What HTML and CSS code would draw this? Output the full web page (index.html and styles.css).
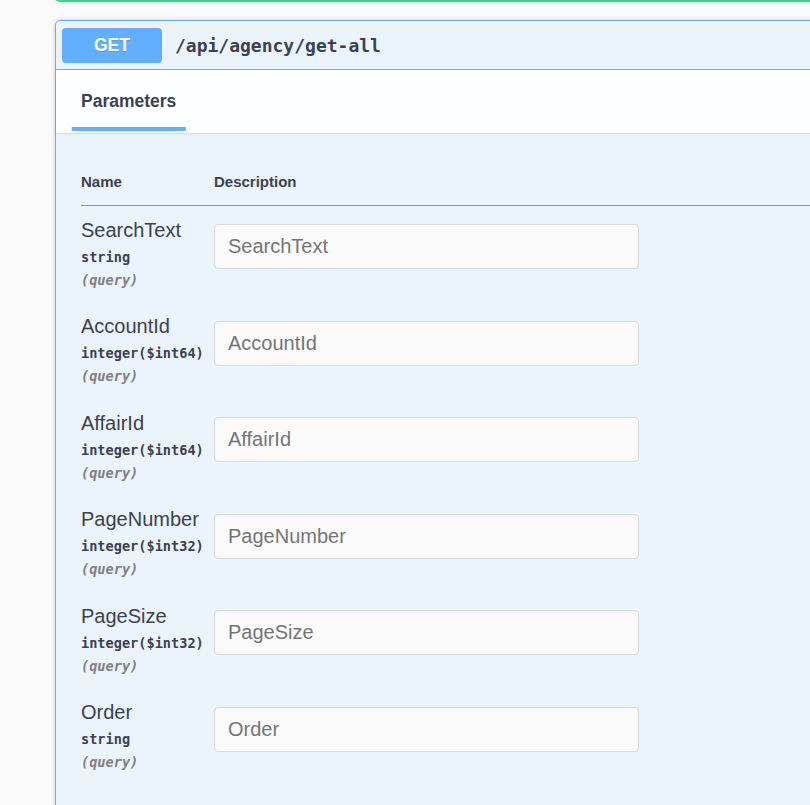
FILE: index.html
```html
<!DOCTYPE html>
<html>
<head>
<meta charset="utf-8">
<link rel="stylesheet" href="styles.css">
</head>
<body>
<div class="wrapper">
  <div class="prev-block"></div>
  <div class="opblock">
    <div class="summary">
      <span class="method">GET</span>
      <span class="path">/api/agency/get-all</span>
    </div>
    <div class="section-header">
      <div class="tab"><span class="tab-label">Parameters</span></div>
    </div>
    <div class="table-container">
      <table class="params">
        <thead>
          <tr><th class="col-name">Name</th><th class="col-desc">Description</th></tr>
        </thead>
        <tbody>
          <tr>
            <td class="col-name"><div class="pname">SearchText</div><div class="ptype">string</div><div class="pin">(query)</div></td>
            <td class="col-desc"><input class="pinput" type="text" placeholder="SearchText" disabled></td>
          </tr>
          <tr>
            <td class="col-name"><div class="pname">AccountId</div><div class="ptype">integer($int64)</div><div class="pin">(query)</div></td>
            <td class="col-desc"><input class="pinput" type="text" placeholder="AccountId" disabled></td>
          </tr>
          <tr>
            <td class="col-name"><div class="pname">AffairId</div><div class="ptype">integer($int64)</div><div class="pin">(query)</div></td>
            <td class="col-desc"><input class="pinput" type="text" placeholder="AffairId" disabled></td>
          </tr>
          <tr>
            <td class="col-name"><div class="pname">PageNumber</div><div class="ptype">integer($int32)</div><div class="pin">(query)</div></td>
            <td class="col-desc"><input class="pinput" type="text" placeholder="PageNumber" disabled></td>
          </tr>
          <tr>
            <td class="col-name"><div class="pname">PageSize</div><div class="ptype">integer($int32)</div><div class="pin">(query)</div></td>
            <td class="col-desc"><input class="pinput" type="text" placeholder="PageSize" disabled></td>
          </tr>
          <tr>
            <td class="col-name"><div class="pname">Order</div><div class="ptype">string</div><div class="pin">(query)</div></td>
            <td class="col-desc"><input class="pinput" type="text" placeholder="Order" disabled></td>
          </tr>
        </tbody>
      </table>
    </div>
  </div>
</div>
</body>
</html>
```
FILE: styles.css
```css
html, body {
  margin: 0;
  padding: 0;
  background: #fafafa;
  overflow: hidden;
  height: 805px;
  font-family: "Liberation Sans", Arial, sans-serif;
  color: #3b4151;
}
.wrapper {
  padding-left: 55px;
  width: 1100px;
}
.prev-block {
  margin-top: -38px;
  height: 40px;
  box-sizing: border-box;
  border: 1px solid #49cc90;
  border-top: none;
  border-bottom-width: 2px;
  border-radius: 0 0 5px 5px;
  background: #fafafa;
  box-shadow: 0 0 4px rgba(0,0,0,.19);
  margin-bottom: 18px;
}
.opblock {
  border: 1px solid #61affe;
  border-radius: 5px;
  background: #ebf3fb;
  box-shadow: 0 0 4px rgba(0,0,0,.19);
  height: 900px;
}
.summary {
  display: flex;
  align-items: center;
  padding: 6px 6px;
  height: 36px;
  border-bottom: 1px solid #61affe;
}
.method {
  display: inline-block;
  width: 100px;
  height: 35px;
  line-height: 35px;
  text-align: center;
  background: #61affe;
  color: #fff;
  border-radius: 4px;
  font-weight: 700;
  font-size: 17.5px;
  text-shadow: 0 1px 0 rgba(0,0,0,.1);
}
.path {
  margin-left: 13px;
  font-family: "DejaVu Sans Mono", monospace;
  font-weight: 700;
  font-size: 18px;
  color: #3b4151;
}
.section-header {
  height: 63px;
  background: rgba(255,255,255,.85);
  box-shadow: 0 1px 2px rgba(0,0,0,.1);
  display: flex;
  align-items: center;
  padding-left: 25px;
}
.tab {
  position: relative;
  font-weight: 700;
  font-size: 17.5px;
}
.tab-label::after {
  content: "";
  position: absolute;
  left: 50%;
  transform: translateX(-50%);
  width: 120%;
  height: 4px;
  bottom: -19px;
  background: #61affe;
}
.table-container {
  padding: 25px;
}
.params {
  border-collapse: collapse;
  width: 100%;
}
.params th {
  text-align: left;
  font-size: 15px;
  font-weight: 700;
  padding: 15px 0 15px;
  line-height: 17px;
  border-bottom: 1px solid rgba(59,65,81,.35);
}
.params th.col-name,
.params td.col-name {
  width: 133px;
}
.params td {
  vertical-align: top;
  padding: 12.5px 0 13.5px;
}
.pname {
  font-size: 20px;
  line-height: 23.5px;
}
.ptype {
  font-family: "DejaVu Sans Mono", monospace;
  font-weight: 700;
  font-size: 13.6px;
  line-height: 17.5px;
  padding: 6.5px 0 5.5px;
}
.pin {
  font-family: "DejaVu Sans Mono", monospace;
  font-weight: 700;
  font-style: italic;
  font-size: 13.6px;
  line-height: 17.5px;
  color: #808080;
}
.pinput {
  display: block;
  margin: 5.5px 0 0;
  box-sizing: border-box;
  width: 425px;
  height: 45px;
  padding: 0 13px;
  border: 1px solid #d9d9d9;
  border-radius: 4px;
  background: #fafafa;
  font-family: "Liberation Sans", Arial, sans-serif;
  font-size: 20px;
  color: #757575;
}
.pinput::placeholder {
  color: #757575;
}
```
